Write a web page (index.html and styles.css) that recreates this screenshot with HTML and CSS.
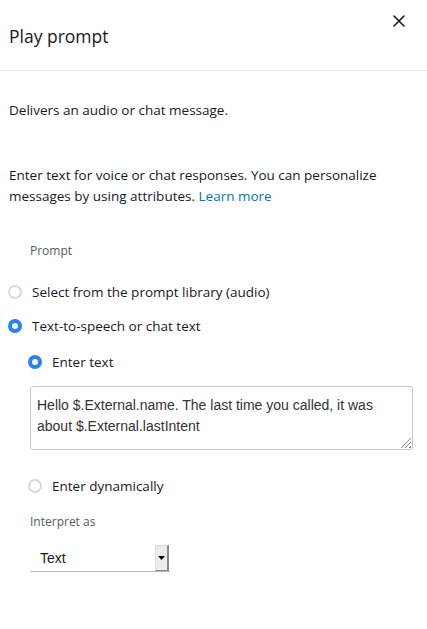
FILE: index.html
```html
<!DOCTYPE html>
<html>
<head>
<meta charset="utf-8">
<link rel="stylesheet" href="styles.css">
</head>
<body>
<div class="panel">
  <header class="header">
    <h1 class="title">Play prompt</h1>
    <button class="close" aria-label="Close">
      <svg width="12" height="12" viewBox="0 0 12 12"><path d="M1 1L11 11M11 1L1 11" stroke="#16191f" stroke-width="1.6" stroke-linecap="round"/></svg>
    </button>
  </header>
  <div class="body">
    <p class="desc">Delivers an audio or chat message.</p>
    <p class="info">Enter text for voice or chat responses. You can personalize messages by using attributes. <a class="link" href="#">Learn more</a></p>
    <div class="label">Prompt</div>
    <div class="radios">
      <label class="radio"><span class="dot"></span><span>Select from the prompt library (audio)</span></label>
      <label class="radio"><span class="dot on"></span><span>Text-to-speech or chat text</span></label>
      <div class="nested">
        <label class="radio"><span class="dot on"></span><span>Enter text</span></label>
        <div class="textarea">Hello $.External.name. The last time you called, it was about $.External.lastIntent<span class="grip"></span></div>
        <label class="radio dyn"><span class="dot"></span><span>Enter dynamically</span></label>
        <div class="label sub">Interpret as</div>
        <div class="select"><span class="sel-text">Text</span><span class="sel-btn"><svg width="7" height="4" viewBox="0 0 7 4"><path d="M0 0H7L3.5 4Z" fill="#000"/></svg></span></div>
      </div>
    </div>
  </div>
</div>
</body>
</html>
```
FILE: styles.css
```css
html, body { margin: 0; padding: 0; background: #fff; }
body { font-family: "Open Sans", "Noto Sans", sans-serif; color: #16191f; font-size: 13.5px; }
.panel { width: 427px; }
.header {
  display: flex; justify-content: space-between; align-items: flex-start;
  height: 70px; border-bottom: 1px solid #eaeded; box-sizing: content-box;
}
.title { margin: 24px 0 0 9px; font-size: 17.5px; font-weight: 400; line-height: 24px; color: #16191f; }
.close { margin: 14px 22px 0 0; padding: 0; border: 0; background: none; width: 13px; height: 13px; display: flex; align-items: center; justify-content: center; }
.body { padding-left: 9px; }
.desc { margin: 29px 0 0 0; line-height: 21px; }
.info { margin: 44px 0 0 0; line-height: 21px; width: 400px; }
.link { color: #0073bb; text-decoration: none; }
.label { margin: 36px 0 0 21px; font-size: 12px; line-height: 16px; color: #545b64; }
.radios { margin-top: 23px; }
.radio { display: flex; align-items: center; gap: 10px; height: 20px; line-height: 20px; margin-bottom: 14px; }
.dot { width: 14px; height: 14px; border-radius: 50%; box-sizing: border-box; border: 2px solid #d5dbdb; margin-left: -1px; background: #fff; }
.dot.on { border: 4px solid #2b7ff6; background: #fff; }
.nested { margin-left: 20px; padding-top: 2px; }
.textarea {
  position: relative;
  margin: 11px 0 0 1px; width: 383px; height: 64px; box-sizing: border-box;
  border: 1px solid #c8c8c8; border-radius: 3px; padding: 8px 30px 0 6px;
  font-family: "Liberation Sans", Arial, sans-serif; font-size: 14px; line-height: 21px; color: #333;
}
.grip {
  position: absolute; right: 1px; bottom: 1px; width: 11px; height: 11px;
  background: repeating-linear-gradient(135deg, transparent 0 2px, #888 2px 3px);
  clip-path: polygon(100% 0, 100% 100%, 0 100%);
}
.dyn { margin-top: 26px; }
.sub { margin: 18px 0 0 1px; }
.select {
  margin: 14px 0 0 1px; width: 140px; height: 28px; box-sizing: border-box;
  border-bottom: 1px solid #bbb; display: flex; align-items: center; justify-content: space-between;
  font-family: "Liberation Sans", Arial, sans-serif; font-size: 14px; color: #16191f;
}
.sel-text { padding-left: 10px; }
.sel-btn {
  width: 14px; height: 26px; box-sizing: border-box; background: #ececec;
  border-right: 2px solid #8a8a8a; border-bottom: 1px solid #8a8a8a; border-left: 1px solid #ddd; border-top: 1px solid #ddd;
  display: flex; align-items: center; justify-content: center; margin-right: 1px; margin-top: 1px;
}
```
